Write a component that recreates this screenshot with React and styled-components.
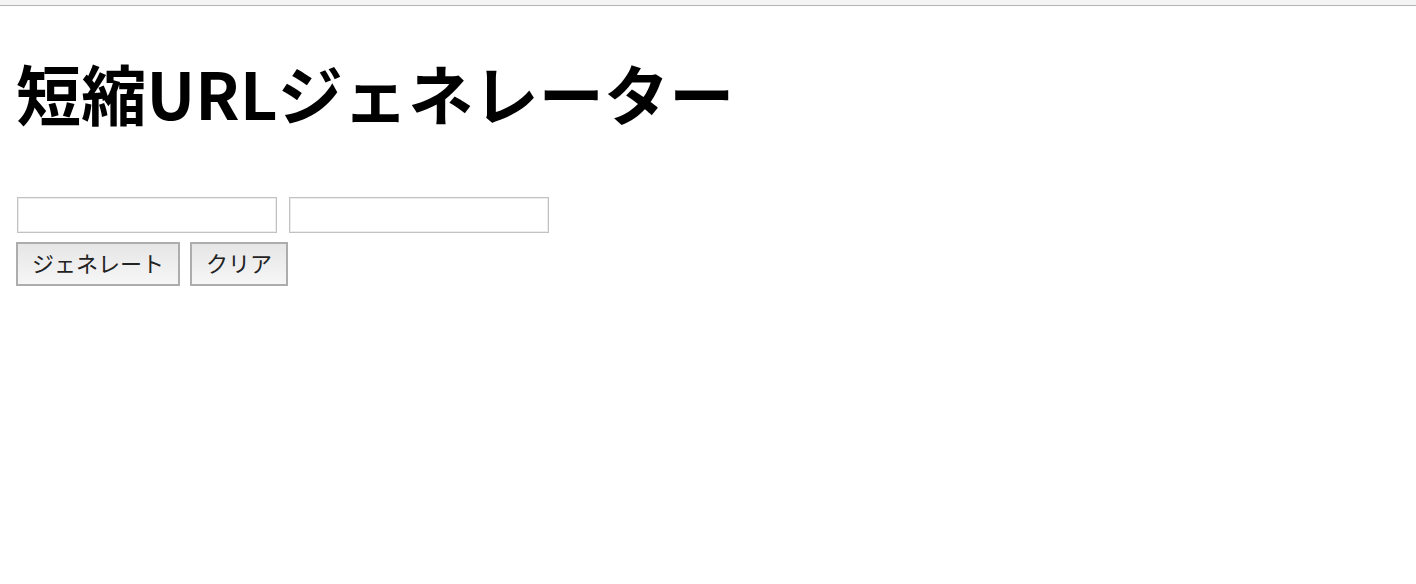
import React from "react";
import styled, { createGlobalStyle } from "styled-components";

const Global = createGlobalStyle`
  html, body { margin: 0; padding: 0; background: #fff; }
  body { font-family: "Noto Sans CJK JP", "Noto Sans", sans-serif; color: #000; }
`;

const TopBar = styled.div`
  height: 5px;
  background: #f3f4f3;
  border-bottom: 1px solid #b3b3b3;
`;

const Main = styled.main`
  padding: 0 16px;
`;

const Title = styled.h1`
  margin: 42px 0 0 0;
  font-size: 65px;
  font-weight: 700;
  line-height: 88px;
  letter-spacing: 0.25px;
`;

const Form = styled.form`
  margin-top: 61px;
  display: flex;
  flex-direction: column;
  gap: 9px;
  align-items: flex-start;
`;

const Row = styled.div`
  display: flex;
  gap: ${(p) => p.$gap}px;
  padding-left: ${(p) => p.$indent || 0}px;
  align-items: center;
`;

const Input = styled.input`
  box-sizing: border-box;
  width: 260px;
  height: 36px;
  margin: 0;
  border: 1px solid #c2c2c2;
  box-shadow: inset 0 0 0 1px #ececec;
  background: #fff;
  outline: none;
  padding: 0 6px;
  font-size: 16px;
`;

const Button = styled.button`
  box-sizing: border-box;
  height: 44px;
  width: ${(p) => p.$w}px;
  border: 2px solid #adadad;
  background: linear-gradient(#e6e6e6, #f6f6f6);
  font-family: "Noto Sans CJK JP", sans-serif;
  font-size: 22px;
  font-weight: 400;
  color: #222;
  padding: 0 0 5px 0;
  cursor: pointer;
`;

export default function App() {
  return (
    <>
      <Global />
      <TopBar />
      <Main>
        <Title>短縮URLジェネレーター</Title>
        <Form onSubmit={(e) => e.preventDefault()}>
          <Row $gap={12} $indent={1}>
            <Input type="text" />
            <Input type="text" />
          </Row>
          <Row $gap={10}>
            <Button type="submit" $w={164}>ジェネレート</Button>
            <Button type="button" $w={98}>クリア</Button>
          </Row>
        </Form>
      </Main>
    </>
  );
}
